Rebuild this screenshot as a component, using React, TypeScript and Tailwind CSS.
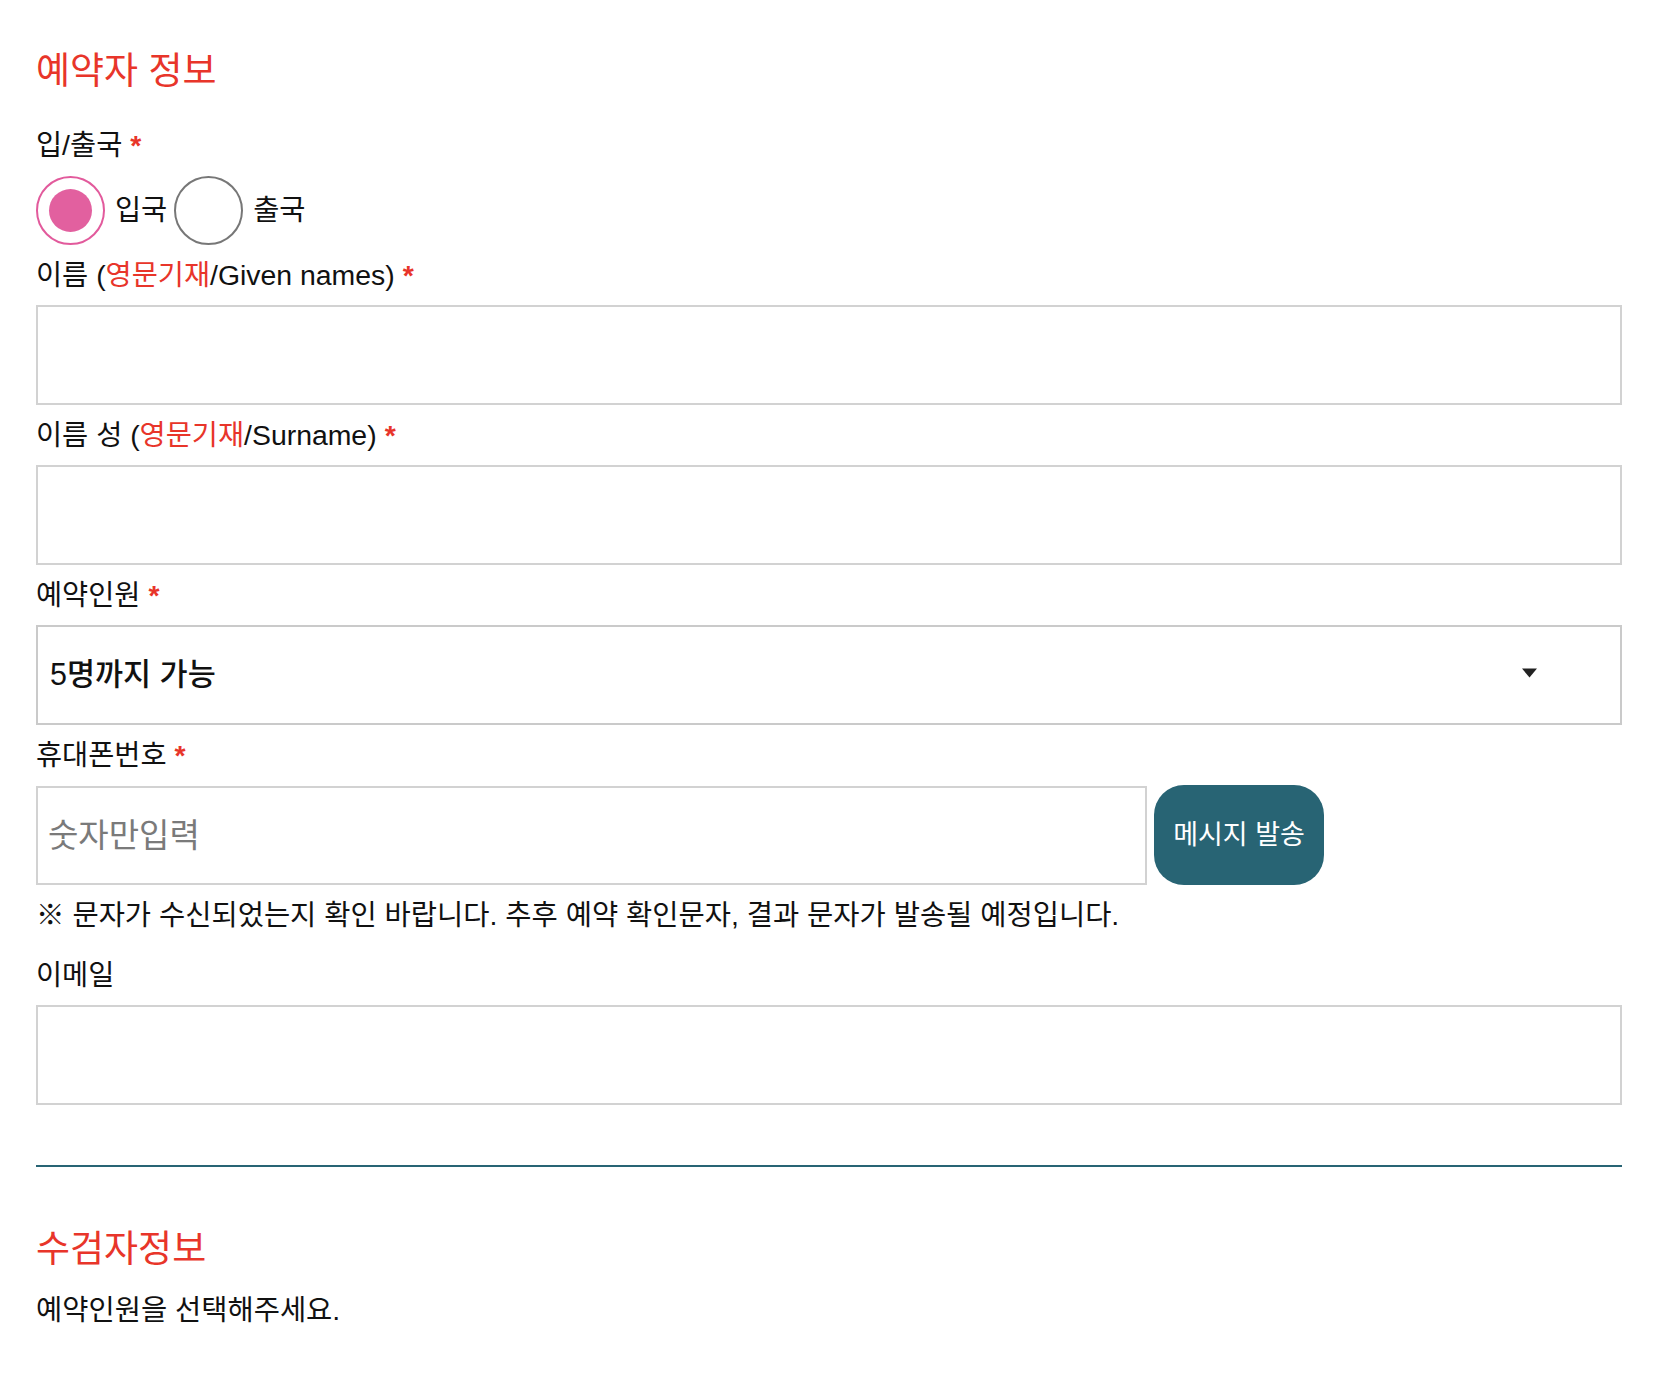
import { useState } from 'react';

type Trip = 'in' | 'out';

const RED = 'text-[#e8352a]';

function Req() {
  return <span className={`ml-[8px] font-bold ${RED}`}>*</span>;
}

function Label({ children, req = true }: { children: React.ReactNode; req?: boolean }) {
  return (
    <div className="flex h-[60px] items-center text-[28.4px] leading-none text-[#111]">
      <span>{children}</span>
      {req && <Req />}
    </div>
  );
}

function TextBox({ placeholder }: { placeholder?: string }) {
  return (
    <input
      type="text"
      placeholder={placeholder}
      className="block h-[100px] w-full border-2 border-[#d2d2d2] bg-white px-[10px] text-[33px] text-[#111] outline-none placeholder:text-[#7a7a7a]"
    />
  );
}

function Radio({ checked, label, onClick }: { checked: boolean; label: string; onClick: () => void }) {
  return (
    <button type="button" onClick={onClick} className="flex items-center">
      <span
        className={`flex h-[69px] w-[69px] items-center justify-center rounded-full border-2 ${
          checked ? 'border-[#e25a9c]' : 'border-[#777]'
        }`}
      >
        {checked && <span className="h-[43px] w-[43px] rounded-full bg-[#e2609f]" />}
      </span>
      <span className="ml-[10px] mr-[7px] text-[28.4px] leading-none text-[#111]">{label}</span>
    </button>
  );
}

export default function App() {
  const [trip, setTrip] = useState<Trip>('in');
  const [count, setCount] = useState('5');

  return (
    <div className="min-h-screen bg-white font-['Liberation_Sans','Noto_Sans_CJK_KR',sans-serif]">
      <div className="ml-[36px] w-[1586px] pt-[40px] pb-[35px]">
        <h2 className={`flex h-[62px] items-center text-[37px] font-normal leading-none ${RED}`}>예약자 정보</h2>

        <div className="mt-[13px]">
          <Label>입/출국</Label>
        </div>
        <div className="flex h-[70px] items-center">
          <Radio checked={trip === 'in'} label="입국" onClick={() => setTrip('in')} />
          <Radio checked={trip === 'out'} label="출국" onClick={() => setTrip('out')} />
        </div>

        <Label>
          이름 (<span className={RED}>영문기재</span>/Given names)
        </Label>
        <TextBox />

        <Label>
          이름 성 (<span className={RED}>영문기재</span>/Surname)
        </Label>
        <TextBox />

        <Label>예약인원</Label>
        <div className="relative">
          <select
            value={count}
            onChange={e => setCount(e.target.value)}
            className="block h-[100px] w-full appearance-none rounded-none border-2 border-[#cacaca] bg-white px-[12px] text-[30.5px] font-medium text-[#111] outline-none"
          >
            <option value="5">5명까지 가능</option>
            <option value="1">1명</option>
            <option value="2">2명</option>
            <option value="3">3명</option>
            <option value="4">4명</option>
          </select>
          <svg
            className="pointer-events-none absolute right-[85px] top-[43px] h-[10px] w-[15px]"
            viewBox="0 0 15 10"
          >
            <path d="M0 0.5h15L7.5 9.5z" fill="#222" />
          </svg>
        </div>

        <Label>휴대폰번호</Label>
        <div className="flex h-[100px] items-stretch">
          <div className="w-[1111px]">
            <input
              type="tel"
              placeholder="숫자만입력"
              className="mt-[1px] block h-[99px] w-full border-2 border-[#d2d2d2] bg-white px-[10px] text-[33px] text-[#111] outline-none placeholder:text-[#7a7a7a]"
            />
          </div>
          <button
            type="button"
            className="ml-[7px] h-[100px] w-[170px] rounded-[30px] bg-[#286474] text-[27px] leading-none text-white"
          >
            메시지 발송
          </button>
        </div>

        <p className="flex h-[60px] items-center text-[28.5px] leading-none text-[#111]">
          ※ 문자가 수신되었는지 확인 바랍니다. 추후 예약 확인문자, 결과 문자가 발송될 예정입니다.
        </p>

        <Label req={false}>이메일</Label>
        <TextBox />

        <div className="mt-[60px] h-[2px] bg-[#286474]" />

        <h2 className={`mt-[51px] flex h-[62px] items-center text-[37px] font-normal leading-none ${RED}`}>수검자정보</h2>
        <p className="flex h-[61px] items-center text-[28.5px] leading-none text-[#111]">예약인원을 선택해주세요.</p>
      </div>
    </div>
  );
}
